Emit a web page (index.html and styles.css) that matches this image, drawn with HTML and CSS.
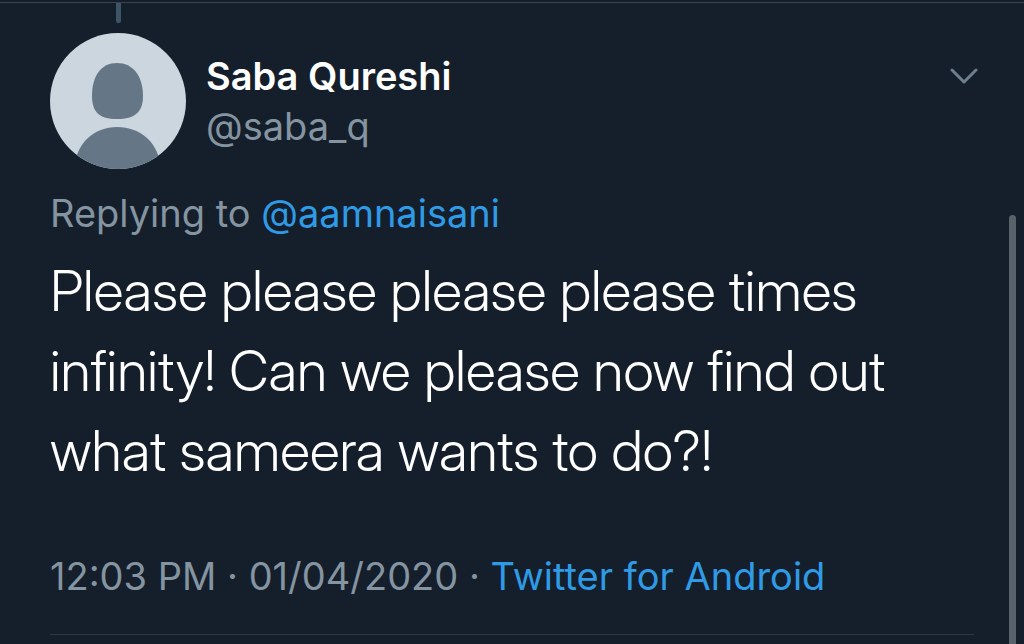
FILE: index.html
```html
<!DOCTYPE html>
<html lang="en">
<head>
    <meta charset="UTF-8">
    <meta name="viewport" content="width=device-width, initial-scale=1.0">
    <title>Saba Qureshi on Twitter</title>
    <link rel="stylesheet" href="styles.css">
</head>
<body>
    <article class="tweet">
        <header class="tweet-header">
            <!-- Thread line and avatar -->
            <div class="avatar-column">
                <div class="thread-line"></div>
                <svg class="avatar" viewBox="0 0 136 136" aria-hidden="true">
                    <clipPath id="avatarClip"><circle cx="68" cy="68" r="68"/></clipPath>
                    <g clip-path="url(#avatarClip)">
                        <rect width="136" height="136" fill="#ccd6df"/>
                        <path fill="#657786" d="M67 30C83 30 93 43 93 63C93 79 85 86 67 86C49 86 42 79 42 63C42 43 51 30 67 30Z"/>
                        <path fill="#657786" d="M24 136C26 110 44 94 67 94C91 94 109 110 111 136Z"/>
                    </g>
                </svg>
            </div>

            <div class="names">
                <div class="name">Saba Qureshi</div>
                <div class="handle">@saba_q</div>
            </div>

            <button class="menu-button" type="button" aria-label="More">
                <svg class="chevron" viewBox="0 0 28 16" aria-hidden="true">
                    <path d="M2 2L14 14L26 2"/>
                </svg>
            </button>
        </header>

        <div class="replying">Replying to <a href="#">@aamnaisani</a></div>

        <p class="tweet-text">Please please please please times infinity! Can we please now find out what sameera wants to do?!</p>

        <div class="meta">12:03 PM · 01/04/2020 · <a href="#">Twitter for Android</a></div>
    </article>

    <div class="scroll-thumb"></div>
</body>
</html>
```
FILE: styles.css
```css
/* General styling */
body {
    margin: 0;
    padding-top: 2px;
    background-color: #151f2b;
    color: #8494a1;
    font-family: Inter, "Liberation Sans", sans-serif;
    font-size: 38px;
    line-height: 50px;
    overflow: hidden;
}

a {
    color: #2f9be6;
    text-decoration: none;
}

.tweet {
    padding: 0 50px;
    border-top: 1px solid #38444d;
}

/* Header */
.tweet-header {
    display: flex;
    gap: 20px;
}

.avatar-column {
    display: flex;
    flex-direction: column;
    align-items: center;
}

.thread-line {
    width: 5px;
    height: 20px;
    margin-bottom: 10px;
    border-radius: 0 0 2px 2px;
    background-color: #3d5466;
}

.avatar {
    display: block;
    width: 136px;
    height: 136px;
}

.names {
    flex: 1;
    padding-top: 48px;
}

.name {
    color: #fff;
    font-weight: 600;
}

.menu-button {
    align-self: flex-start;
    margin: 65px -4px 0 0;
    padding: 0;
    border: none;
    background: none;
    cursor: pointer;
}

.chevron {
    display: block;
    width: 28px;
    height: 16px;
    fill: none;
    stroke: #6f7f8d;
    stroke-width: 3;
    stroke-linecap: round;
    stroke-linejoin: round;
}

/* Tweet content */
.replying {
    margin-top: 19px;
}

.tweet-text {
    margin: 13px 0 60px;
    color: #fff;
    font-family: "Inter Display", Inter, "Liberation Sans", sans-serif;
    font-size: 56px;
    font-weight: 300;
    line-height: 80px;
}

.meta {
    padding-bottom: 33px;
    border-bottom: 1px solid #2c3945;
}

/* Scroll indicator over the right edge */
.scroll-thumb {
    position: fixed;
    top: 215px;
    right: 8px;
    bottom: -8px;
    width: 7px;
    border-radius: 4px;
    background-color: #58626b;
}
```
